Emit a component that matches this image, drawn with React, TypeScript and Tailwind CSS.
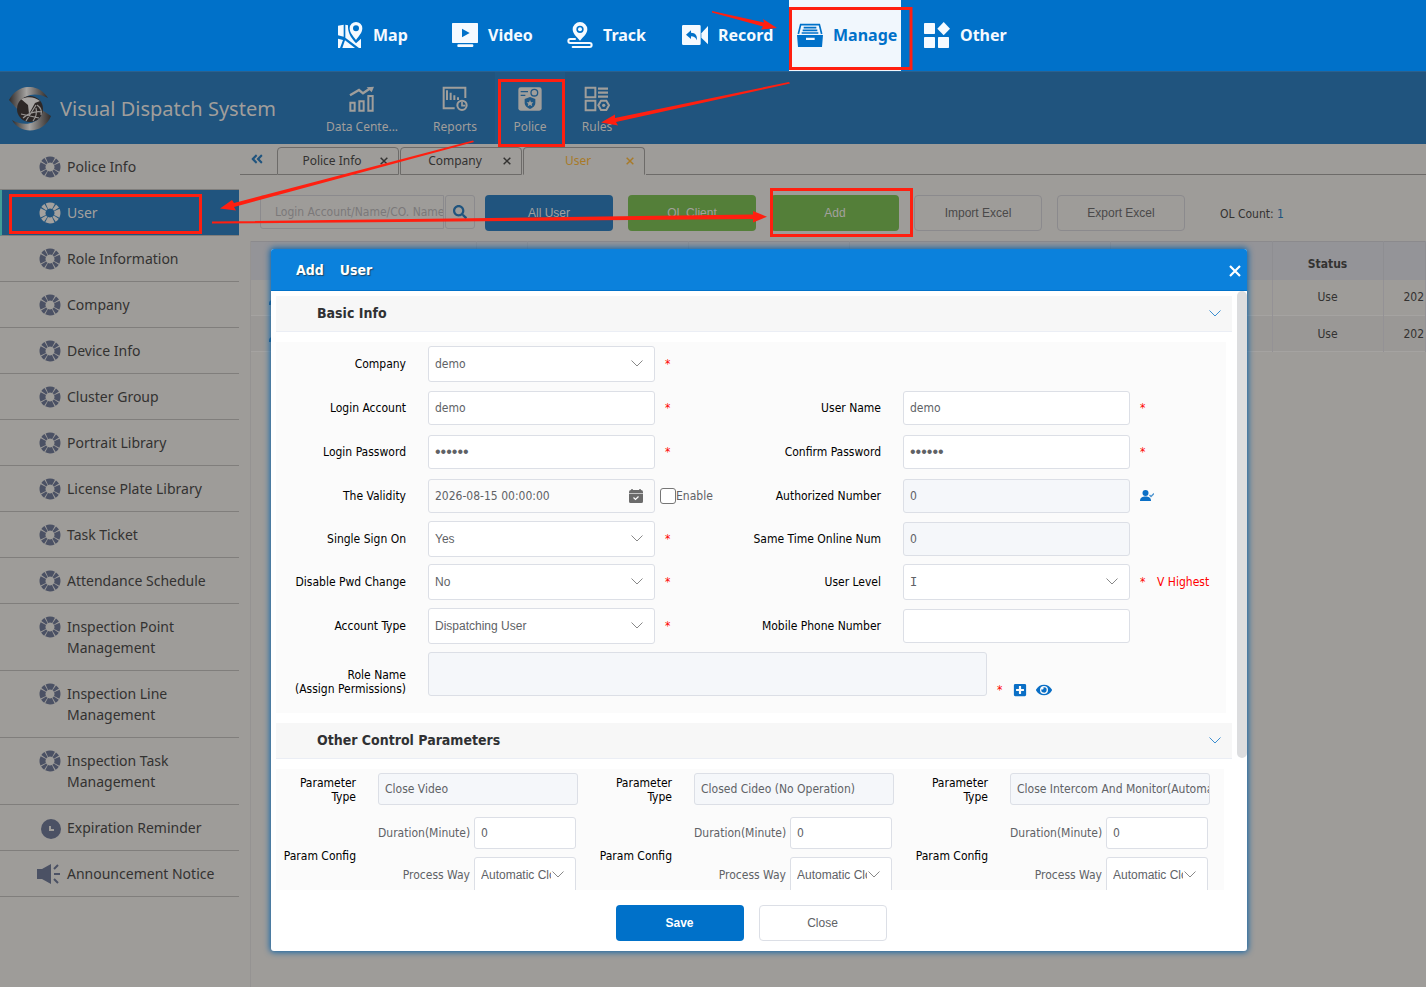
import React, { useId, useState } from 'react';
import { FaEye, FaSearch, FaAngleDoubleLeft, FaPlusSquare, FaPen } from 'react-icons/fa';

type IconProps = { className?: string };

/* Top navigation icons */
const MapIcon = ({ className }: IconProps) => (
  <svg viewBox="0 0 78 78" className={className} fill="currentColor">
    <path d="M3 11L20 8V44L3 40Z" />
    <path d="M3 50L18 54L9 78H3Z" />
    <path d="M25 8L33 10C32 30 40 46 57 64L72 50V78H66L25 47Z" />
    <path d="M24 55L54 78H16Z" />
    <path fillRule="evenodd" d="M57 0a19 19 0 0 1 19 19c0 13-11 24-19 35c-8-11-19-22-19-35a19 19 0 0 1 19-19ZM57 10a9 9 0 1 0 0 18a9 9 0 0 0 0-18Z" />
  </svg>
);

const VideoIcon = ({ className }: IconProps) => (
  <svg viewBox="0 0 78 78" className={className} fill="currentColor">
    <path fillRule="evenodd" d="M2 3H76a2 2 0 0 1 2 2V61a2 2 0 0 1-2 2H2a2 2 0 0 1-2-2V5a2 2 0 0 1 2-2ZM30 20V46L53 33Z" />
    <rect x="16" y="67" width="48" height="8" rx="3" />
  </svg>
);

const TrackIcon = ({ className }: IconProps) => (
  <svg viewBox="0 0 78 78" className={className} fill="currentColor">
    <path fillRule="evenodd" d="M39 0a22 22 0 0 1 22 22c0 13-12 23-22 34c-10-11-22-21-22-34a22 22 0 0 1 22-22ZM39 11a11 11 0 1 0 0 22a11 11 0 0 0 0-22Z" />
    <circle cx="39" cy="22" r="6" />
    <path d="M24 51H10a6 6 0 0 0 0 12H68a6 6 0 0 1 0 12H17" fill="none" stroke="currentColor" strokeWidth="6" strokeLinecap="round" />
  </svg>
);

const RecordIcon = ({ className }: IconProps) => (
  <svg viewBox="0 0 78 78" className={className} fill="currentColor">
    <path fillRule="evenodd" d="M4 9H52a4 4 0 0 1 4 4V65a4 4 0 0 1-4 4H4a4 4 0 0 1-4-4V13a4 4 0 0 1 4-4ZM12 38L27 51V43C36 43 41 46 44 55C47 42 41 32 27 32V25Z" />
    <path d="M58 34L78 12V67L58 47Z" />
  </svg>
);

const ManageIcon = ({ className }: IconProps) => (
  <svg viewBox="0 0 78 78" className={className} fill="currentColor">
    <path d="M4 36L11 8H67L74 36" fill="none" stroke="currentColor" strokeWidth="5" />
    <path d="M20 17H58M17 25H61M14 33H64" stroke="currentColor" strokeWidth="5" />
    <path fillRule="evenodd" d="M0 39H78L75 75H3ZM27 47V54H53V47Z" />
  </svg>
);

const OtherIcon = ({ className }: IconProps) => (
  <svg viewBox="0 0 78 78" className={className} fill="currentColor">
    <rect x="0" y="3" width="33" height="33" rx="2" />
    <rect x="0" y="45" width="33" height="33" rx="2" />
    <rect x="42" y="45" width="33" height="33" rx="2" />
    <path d="M59 0L78 20L59 40L40 20Z" />
  </svg>
);

/* Second level icons */
const DataIcon = ({ className }: IconProps) => (
  <svg viewBox="0 0 78 78" className={className} fill="none" stroke="currentColor" strokeWidth="6">
    <path d="M4 50H17V74H4ZM31 46H44V74H31ZM58 30H71V74H58Z" />
    <path d="M3 28L30 12L42 22L64 7" strokeWidth="7" />
    <path d="M53 4L75 2L68 19Z" fill="currentColor" stroke="none" />
  </svg>
);

const ReportsIcon = ({ className }: IconProps) => (
  <svg viewBox="0 0 78 78" className={className} fill="none" stroke="currentColor" strokeWidth="6">
    <path d="M38 67H5V5H70V36" />
    <path d="M15 13V42M26 20V42M37 28V42M48 34V42" />
    <circle cx="60" cy="58" r="14" />
    <path d="M60 48V59H70" strokeWidth="5" />
  </svg>
);

const PoliceIcon = ({ className }: IconProps) => (
  <svg viewBox="0 0 78 78" className={className}>
    <rect x="4" y="4" width="70" height="70" rx="7" fill="currentColor" />
    <path d="M11 17H33M11 28H25" stroke="#215884" strokeWidth="4" />
    <circle cx="52" cy="20" r="10" fill="none" stroke="#215884" strokeWidth="4" />
    <path d="M39 33L55 39V50C55 60 47 65 39 69C31 65 23 60 23 50V39Z" fill="#215884" />
    <path d="M39 42L42 49L49 49L44 54L46 61L39 57L32 61L34 54L29 49L36 49Z" fill="currentColor" />
  </svg>
);

const RulesIcon = ({ className }: IconProps) => (
  <svg viewBox="0 0 78 78" className={className} fill="none" stroke="currentColor" strokeWidth="6">
    <path d="M5 5H34V34H5ZM5 44H34V73H5Z" />
    <path d="M42 8H72M42 20H72M42 32H72" strokeWidth="7" />
    <path d="M51 44H67L75 58L67 72H51L43 58Z" />
    <circle cx="59" cy="58" r="5" fill="currentColor" stroke="none" />
  </svg>
);

/* Sidebar icons */
const RingIcon = () => (
  <svg viewBox="0 0 22 22" className="size-[22px] shrink-0" fill="none" stroke="currentColor">
    <circle cx="11" cy="11" r="7.5" strokeWidth="6" strokeDasharray="6.9 0.9 3.08 0.9" strokeDashoffset="3.45" />
  </svg>
);

const ClockIcon = () => (
  <svg viewBox="0 0 22 22" className="size-[22px] shrink-0">
    <circle cx="12" cy="12" r="10" fill="currentColor" />
    <path d="M11 9V13H15" fill="none" stroke="#9e9c99" strokeWidth="2" />
  </svg>
);

const HornIcon = () => (
  <svg viewBox="0 0 24 22" className="-ml-0.5 h-[22px] w-6 shrink-0" fill="currentColor">
    <path d="M0 6H5L14 1V21L5 16H0Z" />
    <path d="M17 6L21 2M17 11H23M17 16L21 20" stroke="currentColor" strokeWidth="2" />
  </svg>
);

const Logo = () => (
  <svg viewBox="0 0 44 44" className="size-11 shrink-0">
    <defs>
      <linearGradient id="metal" x1="0" y1="0" x2="1" y2="0">
        <stop offset="0" stopColor="#2f2b2a" />
        <stop offset="0.45" stopColor="#a5a3a1" />
        <stop offset="0.75" stopColor="#615e5d" />
        <stop offset="1" stopColor="#2f2b2a" />
      </linearGradient>
    </defs>
    <path d="M1 13C9 -3 30 -5 40 11C28 5 17 7 12 16L10 23Z" fill="url(#metal)" />
    <path d="M43 29C36 47 12 48 4 33C14 39 27 38 33 29L34 23Z" fill="url(#metal)" />
    <circle cx="22" cy="22" r="13" fill="#2d2726" />
    <path d="M29 18C32 20 34 24 33 28M15 31C21 26 28 24 34 25M18 34C21 29 25 23 28 18M13 27L31 31M25 34C28 30 29 25 28 21" fill="none" stroke="#9b9896" strokeWidth="1.2" />
    <path d="M13 12C20 9 27 10 32 14L27 16L21 27L20 18Z" fill="#a8a5a3" />
  </svg>
);

const UserCheckIcon = () => (
  <svg viewBox="0 0 14 11" className="h-[11px] w-[14px]" fill="#0a6fc6">
    <circle cx="5.5" cy="3" r="3" />
    <path d="M0 11C0 7.500 2.500 6.500 5.500 6.500S11 7.500 11 11Z" />
    <path d="M9.500 5L11 6.500L14 3.500" fill="none" stroke="#4c93cf" strokeWidth="1.300" />
  </svg>
);

const CalendarIcon = () => (
  <svg viewBox="0 0 14 14" className="size-[14px]">
    <path d="M0 3A2 2 0 0 1 2 1H12A2 2 0 0 1 14 3V12.500A1.500 1.500 0 0 1 12.500 14H1.500A1.500 1.500 0 0 1 0 12.500Z" fill="#6b6b6b" />
    <path d="M3 0V2M11 0V2" stroke="#6b6b6b" strokeWidth="1.500" />
    <path d="M0 4.500H14" stroke="#c4c4c4" strokeWidth="1" />
    <path d="M4.500 8.500L6.500 10.500L9.500 7.500" fill="none" stroke="#fff" strokeWidth="1.200" />
  </svg>
);

const Chevron = ({ className }: IconProps) => (
  <svg viewBox="0 0 12 7" className={`h-[7px] w-3 ${className ?? ''}`} fill="none" stroke="currentColor">
    <path d="M0.500 0.500L6 6L11.500 0.500" />
  </svg>
);

const Cross = ({ className }: IconProps) => (
  <svg viewBox="0 0 12 12" className={className} fill="none" stroke="currentColor" strokeWidth="2.2">
    <path d="M1 1L11 11M11 1L1 11" />
  </svg>
);

const NAV = [
  { label: 'Map', Icon: MapIcon },
  { label: 'Video', Icon: VideoIcon },
  { label: 'Track', Icon: TrackIcon },
  { label: 'Record', Icon: RecordIcon },
  { label: 'Manage', Icon: ManageIcon, active: true },
  { label: 'Other', Icon: OtherIcon },
];

const SUB_NAV = [
  { label: 'Data Cente...', Icon: DataIcon, width: 'w-[106px]' },
  { label: 'Reports', Icon: ReportsIcon, width: 'w-20' },
  { label: 'Police', Icon: PoliceIcon, width: 'w-[70px] bg-[#215884]' },
  { label: 'Rules', Icon: RulesIcon, width: 'w-16' },
];

const MENU = [
  'Police Info',
  'User',
  'Role Information',
  'Company',
  'Device Info',
  'Cluster Group',
  'Portrait Library',
  'License Plate Library',
  'Task Ticket',
  'Attendance Schedule',
  'Inspection Point Management',
  'Inspection Line Management',
  'Inspection Task Management',
  'Expiration Reminder',
  'Announcement Notice',
];

const TABS = ['Police Info', 'Company', 'User'];

const COLUMNS = ['w-[225px]', 'w-[51px]', 'w-[161px]', 'w-[161px]', 'w-[261px]', 'w-[162px]', 'w-[111px]', ''];

const PARAMS = ['Close Video', 'Closed Cideo (No Operation)', 'Close Intercom And Monitor(Automatic)'];

const box = 'w-full rounded-[3px] border border-[#dcdfe6] px-1.5 text-[#606266] outline-none';

function TopNav() {
  return (
    <nav className="flex h-[71px] shrink-0 gap-[3px] bg-[#0071c9] pb-0.5 pl-[329px] font-['Noto_Sans',sans-serif]">
      {NAV.map(({ label, Icon, active }) => (
        <a
          key={label}
          href="#"
          className={`flex w-28 items-center gap-2.5 pl-2 text-base font-bold ${
            active ? 'mr-3 -mb-0.5 bg-[#f1f7fd] pb-0.5 text-[#0071c9]' : 'text-[#f5faff]'
          }`}
        >
          <Icon className="size-[26px] shrink-0" />
          {label}
        </a>
      ))}
    </nav>
  );
}

function SubHeader() {
  return (
    <header className="flex h-[73px] shrink-0 border-t border-[#2b618e] bg-[#20547e] font-['Noto_Sans',sans-serif] text-[#a09e9b]">
      <div className="flex w-[309px] items-center gap-2 pt-px pl-2">
        <Logo />
        <h1 className="text-xl">Visual Dispatch System</h1>
      </div>
      {SUB_NAV.map(({ label, Icon, width }) => (
        <a key={label} href="#" className={`flex flex-col items-center gap-[3px] pt-[14px] text-xs ${width}`}>
          <Icon className="size-[26px]" />
          <span className="leading-6">{label}</span>
        </a>
      ))}
    </header>
  );
}

function Sidebar() {
  return (
    <aside className="w-60 shrink-0 pr-px font-['Noto_Sans',sans-serif]">
      {MENU.map((item) => {
        const active = item === 'User';
        return (
          <a
            key={item}
            href="#"
            className={`flex items-start gap-1.5 border-b border-[#807e7c] py-3 pr-3 text-sm leading-[21px] ${
              active
                ? 'border-l-2 border-l-[#409e97] bg-[#20547e] pl-[37px] text-[#a3a19e]'
                : 'pl-[39px] text-[#333231]'
            }`}
          >
            <span className={`h-[21px] w-[22px] shrink-0 ${active ? 'text-[#a3a19e]' : 'text-[#4b5164]'}`}>
              {item === 'Expiration Reminder' ? <ClockIcon /> : item === 'Announcement Notice' ? <HornIcon /> : <RingIcon />}
            </span>
            {item}
          </a>
        );
      })}
    </aside>
  );
}

function TabBar() {
  return (
    <div className="flex h-[31px] items-end font-['Noto_Sans',sans-serif] text-xs">
      <button className="flex h-full w-[37px] justify-center border-b border-[#6d6b69] pt-2 pr-1 text-[#20547e]" title="Collapse">
        <FaAngleDoubleLeft className="size-[14px]" />
      </button>
      {TABS.map((tab) => {
        const active = tab === 'User';
        return (
          <div
            key={tab}
            className={`mr-px flex h-7 w-[122px] items-center rounded-t-sm border border-[#6d6b69] ${
              active ? 'border-b-transparent text-[#a87a28]' : 'text-[#333231]'
            }`}
          >
            <a href="#" className="flex-1 pl-1.5 text-center">{tab}</a>
            <button className="pr-2.5" title="Close tab">
              <Cross className="size-2" />
            </button>
          </div>
        );
      })}
      <div className="h-px flex-1 bg-[#6d6b69]" />
    </div>
  );
}

function Toolbar() {
  const btn = 'h-9 w-32 shrink-0 rounded-[4px]';
  return (
    <div className="flex h-[66px] items-start gap-[15px] pt-5 pl-5 font-['Liberation_Sans',sans-serif] text-xs text-[#a3a19e]">
      <div className="-mr-[5px] flex gap-px">
        <input
          aria-label="Search users"
          placeholder="Login Account/Name/CO. Name"
          className="h-[34px] w-[184px] rounded-l-[3px] border border-[#8b8a8d] pl-3.5 font-['DejaVu_Sans_Condensed',sans-serif] outline-none placeholder:text-[#7b797a]"
        />
        <button className="flex h-[34px] w-[30px] items-center justify-center rounded-[3px] border border-[#8b8a8d]" title="Search">
          <FaSearch className="size-[14px] text-[#20547e]" />
        </button>
      </div>
      <button className={`${btn} bg-[#20547e]`}>All User</button>
      <button className={`${btn} bg-[#547f39]`}>OL Client</button>
      <button className={`${btn} bg-[#547f39]`}>Add</button>
      <button className={`${btn} border border-[#8b8a8d] text-[#4a4949]`}>Import Excel</button>
      <button className={`${btn} border border-[#8b8a8d] text-[#4a4949]`}>Export Excel</button>
      <p className="pt-px pl-5 font-['DejaVu_Sans_Condensed',sans-serif] leading-9 whitespace-nowrap text-[#333231]">
        OL Count: <span className="text-[#20547e]">1</span>
      </p>
    </div>
  );
}

function UserTable() {
  return (
    <div className="ml-2.5 flex-1 overflow-hidden border-l border-[#959392] font-['DejaVu_Sans_Condensed',sans-serif] text-xs text-[#333231]">
      <table className="w-full table-fixed">
        <thead>
          <tr className="h-[38px] border-t border-[#8b8a8d] bg-[#949498]">
            {COLUMNS.map((width, i) => (
              <th key={i} className={`${width} border-r border-[#8e8e92] pt-1.5`}>
                {i === 6 && 'Status'}
              </th>
            ))}
          </tr>
        </thead>
        <tbody>
          {[0, 1].map((row) => (
            <tr key={row} className={`h-9 border-b border-[#a5a3a1] ${row ? 'bg-[#9a9896]' : ''}`}>
              {COLUMNS.map((_, i) => (
                <td key={i} className={`border-r border-[#949295] ${i === 7 ? 'pl-5' : 'text-center'}`}>
                  {i === 0 && (
                    <button className="flex pt-1 pl-[18px] text-[#20547e]" title="Edit">
                      <FaPen className="size-3" />
                    </button>
                  )}
                  {i === 6 && 'Use'}
                  {i === 7 && '202'}
                </td>
              ))}
            </tr>
          ))}
        </tbody>
      </table>
    </div>
  );
}

function Star() {
  return <span className="w-5 pl-2.5 text-[#ff0000]">*</span>;
}

type FieldProps = {
  label: string;
  value?: string;
  kind?: 'text' | 'password' | 'select' | 'date';
  required?: boolean;
  disabled?: boolean;
  after?: React.ReactNode;
};

function Field({ label, value = '', kind = 'text', required, disabled, after }: FieldProps) {
  const id = useId();
  const selectFont = value === 'I' ? "font-['DejaVu_Sans_Mono',monospace]" : "font-['Liberation_Sans',sans-serif]";
  return (
    <div className="flex items-center">
      <label htmlFor={id} className="w-[130px] shrink-0 text-right text-black">
        {label}
      </label>
      <div className="relative ml-[22px] w-[227px] shrink-0">
        {kind === 'select' ? (
          <>
            <select id={id} className={`${box} h-9 appearance-none bg-white ${value === 'demo' ? '' : selectFont}`}>
              <option>{value}</option>
            </select>
            <Chevron className="pointer-events-none absolute top-3.5 right-3 text-[#888]" />
          </>
        ) : (
          <input
            id={id}
            type={kind === 'password' ? 'password' : 'text'}
            defaultValue={value}
            disabled={disabled}
            className={`${box} h-[34px] ${disabled ? 'bg-[#f5f7fa]' : kind === 'date' ? 'bg-[#fbfbfb]' : 'bg-white'} ${
              kind === 'password' ? "font-['Liberation_Sans',sans-serif] text-base" : ''
            }`}
          />
        )}
        {kind === 'date' && (
          <span className="pointer-events-none absolute top-2.5 right-3">
            <CalendarIcon />
          </span>
        )}
      </div>
      {required && <Star />}
      {after}
    </div>
  );
}

function SectionHead({ title }: { title: string }) {
  return (
    <div className="mr-[15px] ml-[5px] flex h-9 items-center justify-between border-b border-[#ebeef5] bg-[#f7f7f7] pr-[11px] pb-px pl-[41px]">
      <h2 className="text-sm font-bold text-[#303133]">{title}</h2>
      <button title="Toggle section" className="pt-px text-[#3d8fd1]">
        <Chevron />
      </button>
    </div>
  );
}

function ParamBlock({ type }: { type: string }) {
  const id = useId();
  return (
    <div className="grid grid-cols-[80px_1fr] gap-x-[22px] leading-[14px]">
      <label htmlFor={`${id}-type`} className="w-20 pt-[7px] pl-5 text-right text-black">
        Parameter Type
      </label>
      <input id={`${id}-type`} defaultValue={type} disabled className={`${box} mt-1 h-8 max-w-[200px] bg-[#f5f7fa] pr-0`} />
      <span className="pt-[44px] text-right text-black">Param Config</span>
      <div className="grid max-w-[198px] grid-cols-[92px_1fr] items-center gap-x-1 gap-y-2 pt-3 text-[#606266]">
        <label htmlFor={`${id}-duration`} className="text-right">Duration(Minute)</label>
        <input id={`${id}-duration`} defaultValue="0" className={`${box} h-8 bg-white`} />
        <label htmlFor={`${id}-way`} className="text-right">Process Way</label>
        <div className="relative">
          <select id={`${id}-way`} className={`${box} h-9 appearance-none bg-white pr-6 font-['Liberation_Sans',sans-serif]`}>
            <option>Automatic Close</option>
          </select>
          <Chevron className="pointer-events-none absolute top-3.5 right-3 text-[#888]" />
        </div>
      </div>
    </div>
  );
}

function AddUserDialog({ onClose }: { onClose: () => void }) {
  return (
    <div className="absolute inset-0 flex pt-[249px] pr-[179px] pb-9 pl-[271px]">
      <div
        role="dialog"
        aria-label="Add User"
        className="flex min-w-0 flex-1 flex-col overflow-hidden rounded-[3px] bg-white font-['DejaVu_Sans_Condensed',sans-serif] text-xs shadow-[0_0_6px_1px_#0b62a8]"
      >
        <div className="flex h-[42px] shrink-0 items-center justify-between border-b border-[#0071c9] bg-[#0b81dc] pr-1.5 pl-[25px] text-white">
          <h2 className="flex gap-4 text-sm font-bold [text-shadow:1px_1px_1px_#1c4566]">
            <span>Add</span>
            <span>User</span>
          </h2>
          <button onClick={onClose} title="Close dialog" className="pt-0.5">
            <Cross className="size-3" />
          </button>
        </div>

        <div className="relative min-h-0 flex-1 overflow-hidden pt-[5px]">
          <div className="absolute top-0 right-0 h-[78%] w-2.5 rounded-full bg-[#dcdddf]" />
          <SectionHead title="Basic Info" />
          <div className="mt-2.5 mr-[21px] ml-[5px] bg-[#fbfbfb]">
            <div className="grid grid-cols-2 grid-rows-[44px_44px_44px_43px_43px_44px_44px]">
              <Field label="Company" value="demo" kind="select" required />
              <div />
              <Field label="Login Account" value="demo" required />
              <Field label="User Name" value="demo" required />
              <Field label="Login Password" value="demo12" kind="password" required />
              <Field label="Confirm Password" value="demo12" kind="password" required />
              <Field
                label="The Validity"
                value="2026-08-15 00:00:00"
                kind="date"
                after={
                  <label className="flex items-center pl-[5px] text-[#606266]">
                    <input type="checkbox" className="size-4 appearance-none rounded-[3px] border border-[#767676] bg-white" />
                    Enable
                  </label>
                }
              />
              <Field
                label="Authorized Number"
                value="0"
                disabled
                after={
                  <button className="pl-2.5" title="Authorize">
                    <UserCheckIcon />
                  </button>
                }
              />
              <Field label="Single Sign On" value="Yes" kind="select" required />
              <Field label="Same Time Online Num" value="0" disabled />
              <Field label="Disable Pwd Change" value="No" kind="select" required />
              <Field
                label="User Level"
                value="I"
                kind="select"
                required
                after={<span className="pl-[7px] whitespace-nowrap text-[#ff0000]">V Highest</span>}
              />
              <Field label="Account Type" value="Dispatching User" kind="select" required />
              <Field label="Mobile Phone Number" />
            </div>
            <div className="flex h-[65px] pt-1">
              <label htmlFor="role" className="w-[130px] shrink-0 pt-4 text-right leading-[14px] text-black">
                Role Name
                <br />
                (Assign Permissions)
              </label>
              <textarea id="role" disabled className={`${box} ml-[22px] h-11 max-w-[559px] resize-none bg-[#f5f7fa]`} />
              <div className="flex h-12 items-center self-start pt-7">
                <Star />
                <button className="pl-1.5 text-[#0a6fc6]" title="Add role">
                  <FaPlusSquare className="size-[14px]" />
                </button>
                <button className="pl-[9px] text-[#0a6fc6]" title="View role">
                  <FaEye className="size-4" />
                </button>
              </div>
            </div>
          </div>

          <div className="h-2.5" />
          <SectionHead title="Other Control Parameters" />
          <div className="mt-2.5 mr-[23px] ml-[5px] grid grid-cols-3 bg-[#fbfbfb]">
            {PARAMS.map((p) => (
              <ParamBlock key={p} type={p} />
            ))}
          </div>
        </div>

        <div className="flex h-[61px] shrink-0 justify-center gap-[15px] pt-[15px] pr-4 font-['Liberation_Sans',sans-serif]">
          <button className="h-9 w-32 rounded-[4px] bg-[#0071c9] font-bold text-white">Save</button>
          <button onClick={onClose} className="h-9 w-32 rounded-[4px] border border-[#dcdfe6] text-[#606266]">
            Close
          </button>
        </div>
      </div>
    </div>
  );
}

/* Red guide marks that show the click order */
function GuideMarks() {
  return (
    <svg width="1426" height="987" viewBox="0 0 1426 987" className="pointer-events-none absolute top-0 left-0">
      <g fill="none" stroke="#ff1f10" strokeWidth="3">
        <rect x="790.500" y="8.500" width="120.500" height="60" />
        <rect x="499.500" y="80.500" width="64" height="65" />
        <rect x="10.500" y="195.500" width="190" height="37" />
        <rect x="771.500" y="189.500" width="140" height="46" />
      </g>
      <g fill="#ff1f10">
        <path d="M712 11L764 22.500L763 19L777 28L761 29.500L763 26.500L712 12.500Z" />
        <path d="M789 82L615 118L615 114.500L601 122.500L618 125.500L616 122L790 83.500Z" />
        <path d="M473 140.500L234 203L232 200L220 208.500L236 210.500L234 207L474 142Z" />
        <path d="M212 221.500L753 214.500V211L767 216.700L753 222.500V219L212 223.500Z" />
      </g>
    </svg>
  );
}

export default function App() {
  const [open, setOpen] = useState(true);

  return (
    <div className="relative flex h-screen flex-col overflow-hidden bg-[#9e9c99]">
      <TopNav />
      <SubHeader />
      <div className="flex min-h-0 flex-1">
        <Sidebar />
        <main className="flex min-w-0 flex-1 flex-col">
          <TabBar />
          <Toolbar />
          <UserTable />
        </main>
      </div>
      {open && <AddUserDialog onClose={() => setOpen(false)} />}
      <GuideMarks />
    </div>
  );
}
